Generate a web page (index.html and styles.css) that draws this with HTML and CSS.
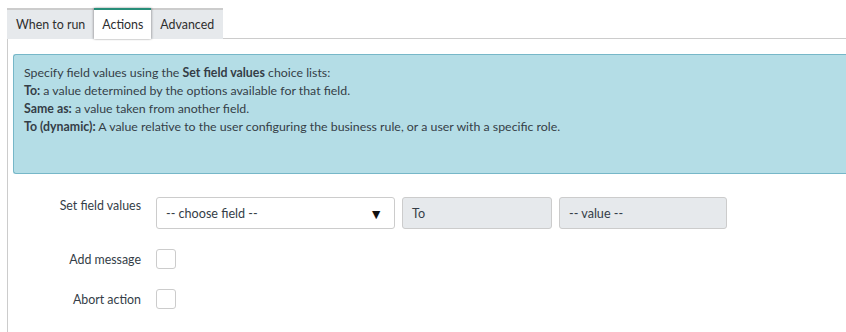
FILE: index.html
```html
<!DOCTYPE html>
<html lang="en">
<head>
    <meta charset="UTF-8">
    <title>Business Rule - Actions</title>
    <link rel="stylesheet" href="styles.css">
</head>
<body>
    <div class="tabs">
        <div class="tab">When to run</div>
        <div class="tab active">Actions</div>
        <div class="tab">Advanced</div>
        <div class="tab-fill"></div>
    </div>
    <div class="panel">
        <div class="notice">
            <div>Specify field values using the <b>Set field values</b> choice lists:</div>
            <div><b>To:</b> a value determined by the options available for that field.</div>
            <div><b>Same as:</b> a value taken from another field.</div>
            <div><b>To (dynamic):</b> A value relative to the user configuring the business rule, or a user with a specific role.</div>
        </div>
        <div class="form">
            <div class="label top">Set field values</div>
            <div class="controls">
                <div class="select">
                    <span>-- choose field --</span>
                    <span class="arrow">&#9660;</span>
                </div>
                <div class="readonly op">To</div>
                <div class="readonly val">-- value --</div>
            </div>
            <div class="label">Add message</div>
            <div class="controls"><span class="checkbox"></span></div>
            <div class="label">Abort action</div>
            <div class="controls"><span class="checkbox"></span></div>
        </div>
    </div>
</body>
</html>
```

FILE: styles.css
```css
body {
    font-family: Lato, "Open Sans", sans-serif;
    font-size: 12.35px;
    color: #343d47;
    background: #ffffff;
    margin: 0;
    padding: 8px 0 0 7px;
}
b {
    font-weight: 700;
}
.tabs {
    display: flex;
    height: 31px;
}
.tab {
    background: #e6e9ec;
    border-top: 2px solid #cccccc;
    padding: 7px 9px 0 9px;
    font-size: 12.4px;
    color: #2e2e2e;
}
.tab.active {
    background: #ffffff;
    border-top: 2px solid #278e79;
    box-shadow: 1px 0 2px rgba(0, 0, 0, 0.25), -1px 0 2px rgba(0, 0, 0, 0.25);
    position: relative;
    padding: 7px 8px 0 8px;
}
.tab-fill {
    flex: 1;
    border-bottom: 1px solid #cccccc;
}
.panel {
    border-left: 1px solid #cccccc;
    padding: 15px 0 24px 0;
}
.notice {
    margin-left: 5px;
    background: #b4dde6;
    border: 1px solid #76b7c8;
    border-right: none;
    border-radius: 3px 0 0 3px;
    height: 100px;
    padding: 9px 10px 9px 10px;
    line-height: 18px;
}
.form {
    display: grid;
    grid-template-columns: 133px auto;
    column-gap: 15px;
    row-gap: 20px;
    margin-top: 23px;
    align-items: center;
}
.label {
    text-align: right;
    font-size: 12.4px;
}
.label.top {
    align-self: start;
    padding-top: 1px;
}
.controls {
    display: flex;
    gap: 7px;
}
.select, .readonly {
    height: 30px;
    border: 1px solid #cccccc;
    border-radius: 3px;
    display: flex;
    align-items: center;
    padding: 0 9px;
    font-size: 12.6px;
    box-sizing: content-box;
}
.select {
    width: 217px;
    justify-content: space-between;
    padding-right: 11px;
}
.arrow {
    color: #111111;
    font-size: 14px;
}
.readonly {
    background: #e6e9ec;
}
.op {
    width: 130px;
}
.val {
    width: 148px;
}
.checkbox {
    width: 18px;
    height: 18px;
    border: 1px solid #cccccc;
    border-radius: 3px;
    display: block;
}
```
